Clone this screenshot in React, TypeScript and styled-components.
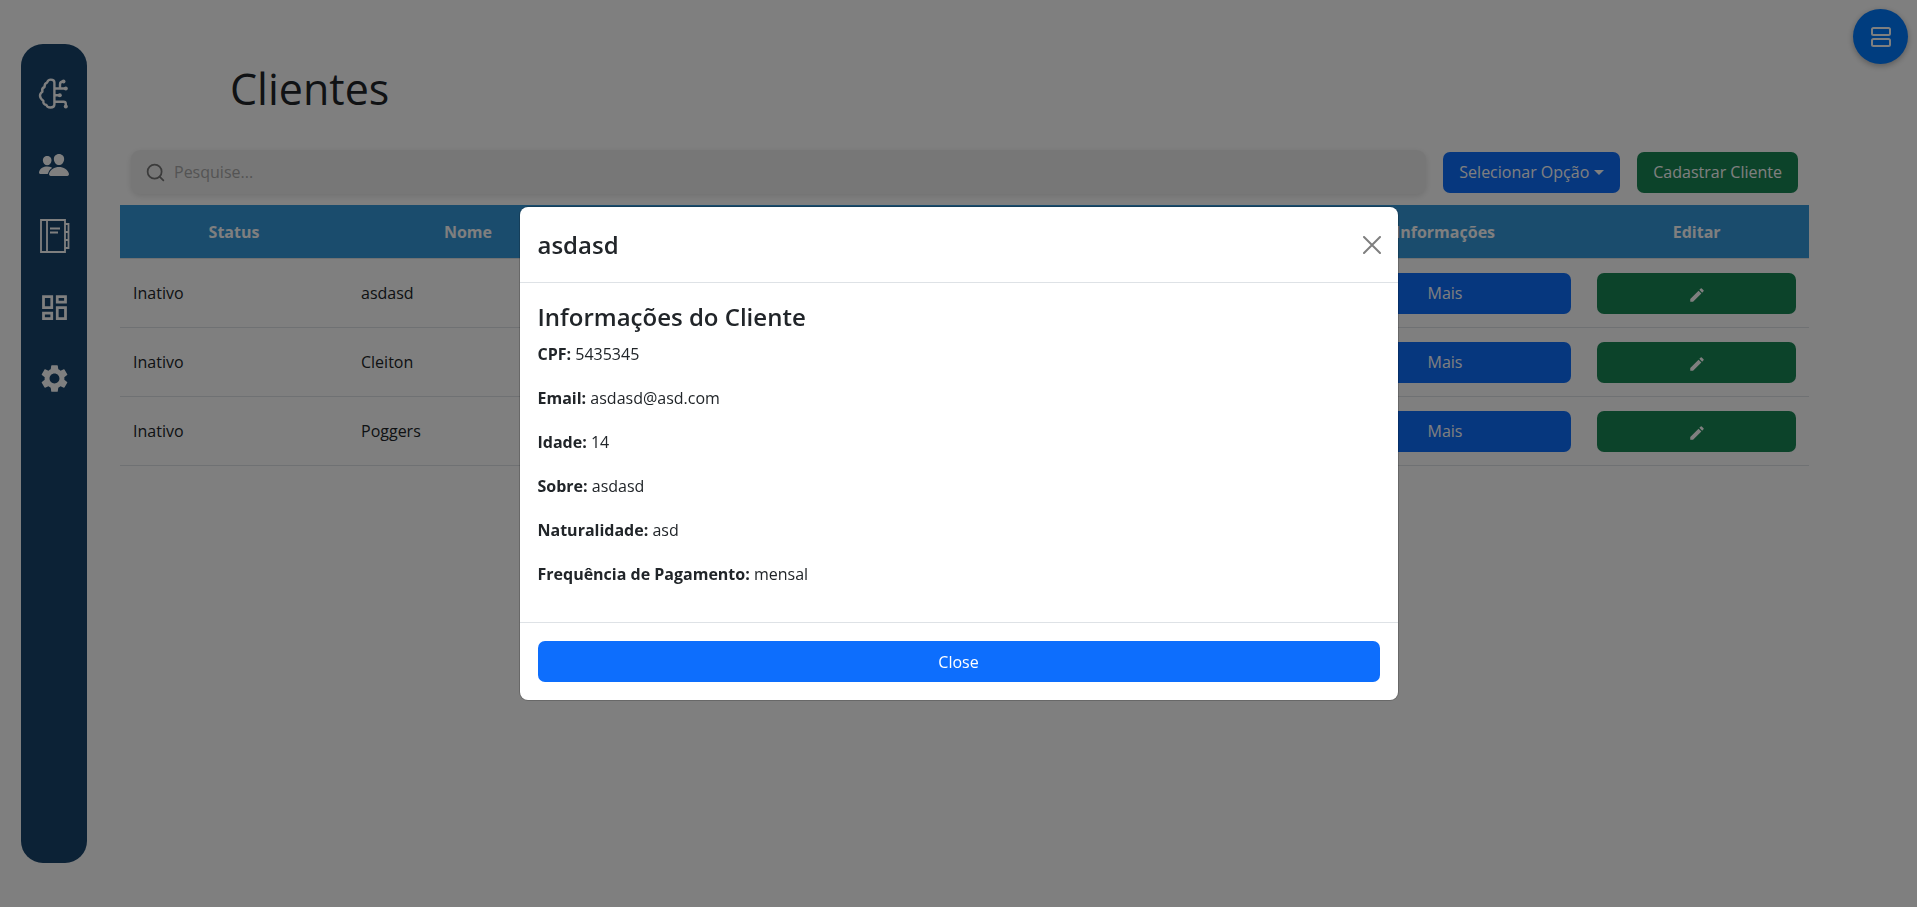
import React, { useState } from 'react';
import styled, { createGlobalStyle, css } from 'styled-components';
import { IoPeople } from 'react-icons/io5';
import { MdOutlineDashboard, MdSettings, MdCreate } from 'react-icons/md';
import { FiSearch } from 'react-icons/fi';

const GlobalStyle = createGlobalStyle`
  *, *::before, *::after { box-sizing: border-box; }
  body {
    margin: 0;
    background: #fff;
    color: #212529;
    font-family: 'Segoe UI', 'Open Sans', 'Noto Sans', sans-serif;
    font-size: 16px;
    line-height: 26px;
  }
  h1, h2, h3, p { margin: 0; }
`;

const Page = styled.div`
  display: flex;
  align-items: flex-start;
  min-height: 100vh;
  padding: 44px 108px 44px 21px;
`;

const Sidebar = styled.nav`
  display: flex;
  flex-direction: column;
  align-items: center;
  gap: 35px;
  width: 66px;
  height: calc(100vh - 88px);
  padding-top: 32px;
  border-radius: 22px;
  background: #18446c;
`;

const SideLink = styled.a`
  display: flex;
  align-items: center;
  justify-content: center;
  width: 36px;
  height: 36px;
  color: #fff;
`;

const Main = styled.main`
  flex: 1;
  min-width: 0;
  margin-left: 33px;
`;

const Title = styled.h1`
  padding: 17px 0 0 110px;
  font-size: 43px;
  font-weight: 400;
  line-height: 56px;
`;

const Toolbar = styled.div`
  display: flex;
  align-items: center;
  gap: 17px;
  padding: 33px 11px 11px;
`;

const SearchBox = styled.label`
  display: flex;
  flex: 1;
  align-items: center;
  gap: 8px;
  height: 44px;
  padding: 0 14px;
  border-radius: 9px;
  background: #efefef;
  box-shadow: 0 2px 6px rgba(0, 0, 0, 0.12);
  color: #777;
`;

const SearchInput = styled.input`
  flex: 1;
  min-width: 0;
  padding: 0;
  border: 0;
  outline: 0;
  background: transparent;
  font: inherit;
  &::placeholder { color: #a9a9a9; opacity: 1; }
`;

const Button = styled.button<{ $tone?: 'green'; $block?: boolean }>`
  display: inline-flex;
  align-items: center;
  justify-content: center;
  gap: 5px;
  height: 41px;
  padding: 0 16px;
  border: 0;
  border-radius: 7px;
  background: ${(p) => (p.$tone === 'green' ? '#198754' : '#0d6efd')};
  color: #fff;
  font: inherit;
  white-space: nowrap;
  cursor: pointer;
  ${(p) => p.$block && css`
    display: flex;
    width: 100%;
  `}
`;

const EditButton = styled(Button)`
  padding-top: 4px;
`;

const Caret = styled.span`
  border: 5px solid transparent;
  border-top-color: currentColor;
  border-bottom: 0;
`;

const Table = styled.table`
  width: 100%;
  border-collapse: separate;
  border-spacing: 0;
  table-layout: fixed;
`;

const HeadCell = styled.th`
  height: 54px;
  padding: 0 13px;
  border-bottom: 1px solid #dee2e6;
  background: #3498db;
  background-clip: padding-box;
  color: #fff;
  font-weight: 700;
  text-align: center;
`;

const Cell = styled.td`
  height: 69px;
  padding: 0 13px;
  border-bottom: 1px solid #dee2e6;
  vertical-align: middle;
`;

const Fab = styled.button`
  position: fixed;
  top: 9px;
  right: 9px;
  display: flex;
  align-items: center;
  justify-content: center;
  width: 55px;
  height: 55px;
  padding: 0;
  border: 0;
  border-radius: 50%;
  background: #007bff;
  box-shadow: 0 2px 6px rgba(0, 0, 0, 0.3);
  color: #fff;
`;

const Backdrop = styled.div`
  position: fixed;
  inset: 0;
  display: grid;
  place-items: center;
  background: rgba(0, 0, 0, 0.5);
`;

const Dialog = styled.section`
  width: 878px;
  max-width: 100%;
  border-radius: 8px;
  background: #fff;
  box-shadow: 0 0 0 1px rgba(0, 0, 0, 0.18);
`;

const DialogHeader = styled.header`
  display: flex;
  align-items: center;
  justify-content: space-between;
  padding: 18px 17px 18px 18px;
  border-bottom: 1px solid #dee2e6;
`;

const DialogTitle = styled.h2`
  font-size: 24px;
  font-weight: 600;
  line-height: 39px;
`;

const CloseIcon = styled.button`
  display: flex;
  padding: 0;
  border: 0;
  background: none;
  color: #7f7f7f;
  cursor: pointer;
`;

const DialogBody = styled.div`
  padding: 18px 18px 17px;
`;

const SectionTitle = styled.h3`
  margin-bottom: 8px;
  font-size: 24px;
  font-weight: 600;
  line-height: 32px;
`;

const Detail = styled.p`
  margin-bottom: 18px;
`;

const DialogFooter = styled.footer`
  padding: 18px;
  border-top: 1px solid #dee2e6;
`;

const BrainIcon = () => (
  <svg width="32" height="32" viewBox="0 0 32 32" fill="none" stroke="currentColor" strokeWidth="2.4" strokeLinejoin="round" aria-hidden="true">
    <path d="M16.4 4.5v22c0 2-1.6 3-4 3-2 0-3.600-1-4-2.500-2.400-.4-3.400-2-3-4C3.500 21.500 2 20 2 17.800s1.200-3.300 2.400-4C3.800 11.500 4.800 9.600 6.500 9 6.500 6.500 7.500 5 9 4.600 9.600 2.600 11 1.600 12.800 1.600c2.200 0 3.600 1 3.600 2.900z" />
    <path d="M16.400 10.500h11.500M22 10.500V6.500c0-2 1-3 3.500-3.200M16.400 17.300h5.500M16.400 23.800h9.200c1.600 0 2.200.8 2.200 2.200v2.500" />
    <g fill="currentColor" stroke="none">
      <circle cx="27.800" cy="10.500" r="2" />
      <circle cx="25.500" cy="3.400" r="2" />
      <circle cx="21.800" cy="17.300" r="2" />
      <circle cx="27.800" cy="28.500" r="2" />
    </g>
  </svg>
);

const NotebookIcon = () => (
  <svg width="32" height="34" viewBox="0 0 32 34" fill="none" stroke="currentColor" strokeWidth="1.800" aria-hidden="true">
    <path d="M3 1h24v32H3zM9 1v32M12 9.500h10M12 13.500h8M27 5h3.500v24H27M27 13h4M27 21h4" />
  </svg>
);

const RowsIcon = () => (
  <svg width="20" height="20" viewBox="0 0 20 20" fill="none" stroke="currentColor" strokeWidth="2" aria-hidden="true">
    <rect x="1" y="1" width="18" height="7" rx="1.500" />
    <rect x="1" y="12" width="18" height="7" rx="1.500" />
  </svg>
);

const links = [
  { label: 'Início', icon: <BrainIcon /> },
  { label: 'Clientes', icon: <IoPeople size={32} /> },
  { label: 'Agenda', icon: <NotebookIcon /> },
  { label: 'Painel', icon: <MdOutlineDashboard size={33} /> },
  { label: 'Configurações', icon: <MdSettings size={33} /> },
];

const clients = ['asdasd', 'Cleiton', 'Poggers'];

const details = [
  ['CPF', '5435345'],
  ['Email', 'asdasd@asd.com'],
  ['Idade', '14'],
  ['Sobre', 'asdasd'],
  ['Naturalidade', 'asd'],
  ['Frequência de Pagamento', 'mensal'],
];

const Col = styled.col<{ $share: number }>`
  width: ${(p) => p.$share}%;
`;

export default function App() {
  const [open, setOpen] = useState(true);
  return (
    <>
      <GlobalStyle />
      <Page>
        <Sidebar>
          {links.map((l) => (
            <SideLink key={l.label} href="#" aria-label={l.label}>{l.icon}</SideLink>
          ))}
        </Sidebar>
        <Main>
          <Title>Clientes</Title>
          <Toolbar>
            <SearchBox>
              <FiSearch size={21} />
              <SearchInput type="text" placeholder="Pesquise..." aria-label="Pesquise" />
            </SearchBox>
            <Button>Selecionar Opção<Caret /></Button>
            <Button $tone="green">Cadastrar Cliente</Button>
          </Toolbar>
          <Table>
            <colgroup>
              <Col $share={13.5} />
              <Col $share={14.2} />
              <Col $share={42.5} />
              <Col $share={16.5} />
              <Col $share={13.3} />
            </colgroup>
            <thead>
              <tr>
                <HeadCell>Status</HeadCell>
                <HeadCell>Nome</HeadCell>
                <HeadCell />
                <HeadCell>Informações</HeadCell>
                <HeadCell>Editar</HeadCell>
              </tr>
            </thead>
            <tbody>
              {clients.map((name) => (
                <tr key={name}>
                  <Cell>Inativo</Cell>
                  <Cell>{name}</Cell>
                  <Cell />
                  <Cell><Button $block onClick={() => setOpen(true)}>Mais</Button></Cell>
                  <Cell><EditButton $tone="green" $block aria-label="Editar"><MdCreate size={18} /></EditButton></Cell>
                </tr>
              ))}
            </tbody>
          </Table>
        </Main>
      </Page>
      <Fab aria-label="Menu"><RowsIcon /></Fab>
      {open && (
        <Backdrop>
          <Dialog role="dialog" aria-modal="true" aria-labelledby="dialog-title">
            <DialogHeader>
              <DialogTitle id="dialog-title">asdasd</DialogTitle>
              <CloseIcon aria-label="Fechar" onClick={() => setOpen(false)}>
                <svg width="18" height="18" viewBox="0 0 18 18" stroke="currentColor" strokeWidth="2" strokeLinecap="round">
                  <path d="M1 1l16 16M17 1L1 17" />
                </svg>
              </CloseIcon>
            </DialogHeader>
            <DialogBody>
              <SectionTitle>Informações do Cliente</SectionTitle>
              {details.map(([label, value]) => (
                <Detail key={label}><strong>{label}:</strong> {value}</Detail>
              ))}
            </DialogBody>
            <DialogFooter>
              <Button $block onClick={() => setOpen(false)}>Close</Button>
            </DialogFooter>
          </Dialog>
        </Backdrop>
      )}
    </>
  );
}
